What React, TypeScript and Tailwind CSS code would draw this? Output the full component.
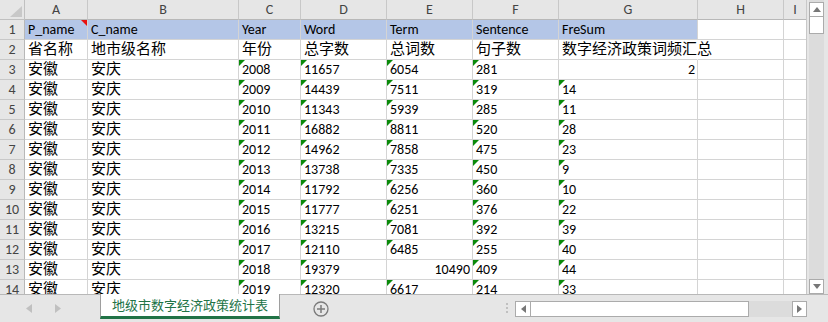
import React from "react";

type Cell = { t: string; right?: boolean; green?: boolean; red?: boolean; overflow?: boolean };

const years = [2008, 2009, 2010, 2011, 2012, 2013, 2014, 2015, 2016, 2017, 2018, 2019];
const word = [11657, 14439, 11343, 16882, 14962, 13738, 11792, 11777, 13215, 12110, 19379, 12320];
const term = [6054, 7511, 5939, 8811, 7858, 7335, 6256, 6251, 7081, 6485, 10490, 6617];
const sent = [281, 319, 285, 520, 475, 450, 360, 376, 392, 255, 409, 214];
const fre = [2, 14, 11, 28, 23, 9, 10, 22, 39, 40, 44, 33];

const colLetters = ["A", "B", "C", "D", "E", "F", "G", "H", "I"];
const gridCols = "grid grid-cols-[25px_63px_151px_62px_86px_86px_86px_139px_86px_23px]";

const isCJK = (s: string) => /[\u4e00-\u9fff]/.test(s);

function buildRows(): Cell[][] {
  const rows: Cell[][] = [];
  rows.push([
    { t: "P_name", red: true },
    { t: "C_name" },
    { t: "Year" },
    { t: "Word" },
    { t: "Term" },
    { t: "Sentence" },
    { t: "FreSum" },
    { t: "" },
    { t: "" },
  ]);
  rows.push([
    { t: "省名称" },
    { t: "地市级名称" },
    { t: "年份" },
    { t: "总字数" },
    { t: "总词数" },
    { t: "句子数" },
    { t: "数字经济政策词频汇总", overflow: true },
    { t: "" },
    { t: "" },
  ]);
  years.forEach((y, i) => {
    const termRight = term[i] === 10490;
    const freRight = i === 0;
    rows.push([
      { t: "安徽" },
      { t: "安庆" },
      { t: String(y), green: true },
      { t: String(word[i]), green: true },
      { t: String(term[i]), green: !termRight, right: termRight },
      { t: String(sent[i]), green: true },
      { t: String(fre[i]), green: !freRight, right: freRight },
      { t: "" },
      { t: "" },
    ]);
  });
  return rows;
}

function GreenTri() {
  return (
    <svg className="absolute left-0 top-0" width="6" height="6" viewBox="0 0 6 6">
      <polygon points="0,0 6,0 0,6" fill="#0a8a0a" />
    </svg>
  );
}

function RedTri() {
  return (
    <svg className="absolute right-0 top-0" width="6" height="6" viewBox="0 0 6 6">
      <polygon points="0,0 6,0 6,6" fill="#e81010" />
    </svg>
  );
}

export default function App() {
  const rows = buildRows();
  return (
    <div
      className="w-[828px] h-[322px] bg-[#e6e6e6] flex flex-col overflow-hidden text-black"
      style={{ fontFamily: "Calibri, Carlito, Lato, 'Noto Sans CJK SC', sans-serif" }}
    >
      <div className="flex h-[294px]">
        <div className="w-[807px] h-[294px] overflow-hidden bg-white border-r border-[#c8c8c8]">
          {/* column header */}
          <div className={`${gridCols} h-[20px] bg-[#e6e6e6]`}>
            <div className="relative border-r border-b border-[#c0c0c0]">
              <svg className="absolute right-[2px] bottom-[2px]" width="12" height="11" viewBox="0 0 12 11">
                <polygon points="12,0 12,11 0,11" fill="#c8c8c8" />
              </svg>
            </div>
            {colLetters.map((c) => (
              <div
                key={c}
                className="border-r border-b border-[#c8c8c8] border-b-[#b8b8b8] text-center text-[14px] leading-[19px] text-[#444]"
              >
                {c}
              </div>
            ))}
          </div>
          {rows.map((r, ri) => (
            <div key={ri} className={`${gridCols} h-[20px]`}>
              <div className="bg-[#e6e6e6] border-r border-b border-[#c8c8c8] border-r-[#b8b8b8] text-center text-[14px] leading-[19px] text-[#444]">
                {ri + 1}
              </div>
              {r.map((c, ci) => {
                const blue = ri === 0 && ci < 7;
                const cjk = isCJK(c.t);
                return (
                  <div
                    key={ci}
                    className={`relative border-b border-[#d4d4d4] whitespace-nowrap leading-[19px] ${
                      c.overflow ? "overflow-visible z-10 border-r border-r-transparent" : "overflow-hidden border-r border-r-[#d4d4d4]"
                    } ${blue ? "bg-[#b4c6e7]" : ""} ${cjk ? "text-[15px]" : "text-[14px]"} ${
                      c.right ? "text-right pr-[2px]" : "pl-[3px]"
                    }`}
                  >
                    {c.t}
                    {c.green && <GreenTri />}
                    {c.red && <RedTri />}
                  </div>
                );
              })}
            </div>
          ))}
        </div>
        {/* vertical scrollbar */}
        <div className="w-[20px] h-[294px] flex flex-col bg-[#e6e6e6] pl-[2px] pr-[3px]">
          <div className="flex-1 flex flex-col bg-[#dcdcdc] pt-[2px]">
            <div className="h-[15px] bg-white border border-[#ababab] flex items-center justify-center">
              <svg width="8" height="5" viewBox="0 0 8 5">
                <polygon points="4,0 8,5 0,5" fill="#777" />
              </svg>
            </div>
            <div className="h-[17px] bg-white border border-[#ababab] border-t-0" />
            <div className="flex-1" />
            <div className="h-[15px] bg-white border border-[#ababab] flex items-center justify-center">
              <svg width="8" height="5" viewBox="0 0 8 5">
                <polygon points="0,0 8,0 4,5" fill="#777" />
              </svg>
            </div>
          </div>
        </div>
      </div>
      {/* bottom tab bar */}
      <div className="h-[28px] flex border-t border-[#b8b8b8] bg-[#e6e6e6]">
        <div className="w-[100px] flex items-center pl-[26px] gap-[23px]">
          <svg width="6" height="9" viewBox="0 0 6 9">
            <polygon points="6,0 6,9 0,4.5" fill="#c0c0c0" />
          </svg>
          <svg width="6" height="9" viewBox="0 0 6 9">
            <polygon points="0,0 0,9 6,4.5" fill="#c0c0c0" />
          </svg>
        </div>
        <div className="w-[180px] h-[25px] -mt-px bg-white border-l border-r border-[#9e9e9e] border-b-[3px] border-b-[#217346] flex items-center justify-center text-[13px] text-[#217346] leading-none">
          地级市数字经济政策统计表
        </div>
        <div className="w-[219px] flex items-start pt-[6px] pl-[33px]">
          <svg width="16" height="16" viewBox="0 0 16 16">
            <circle cx="8" cy="8" r="7" fill="none" stroke="#7a7a7a" strokeWidth="1.3" />
            <line x1="8" y1="4" x2="8" y2="12" stroke="#7a7a7a" strokeWidth="1.5" />
            <line x1="4" y1="8" x2="12" y2="8" stroke="#7a7a7a" strokeWidth="1.5" />
          </svg>
        </div>
        <div className="w-[16px] flex flex-col items-center justify-center gap-[2px] pb-[2px]">
          <div className="w-[2px] h-[2px] bg-[#c0c0c0]" />
          <div className="w-[2px] h-[2px] bg-[#c0c0c0]" />
          <div className="w-[2px] h-[2px] bg-[#c0c0c0]" />
        </div>
        <div className="w-[292px] flex pt-[6px] pb-[6px]">
          <div className="flex w-full h-[16px] bg-[#dcdcdc]">
            <div className="w-[16px] bg-white border border-[#ababab] flex items-center justify-center">
              <svg width="5" height="8" viewBox="0 0 5 8">
                <polygon points="5,0 5,8 0,4" fill="#777" />
              </svg>
            </div>
            <div className="w-[218px] bg-white border border-l-0 border-[#ababab]" />
            <div className="flex-1" />
            <div className="w-[15px] bg-white border border-[#ababab] flex items-center justify-center">
              <svg width="5" height="8" viewBox="0 0 5 8">
                <polygon points="0,0 0,8 5,4" fill="#777" />
              </svg>
            </div>
          </div>
        </div>
      </div>
    </div>
  );
}
